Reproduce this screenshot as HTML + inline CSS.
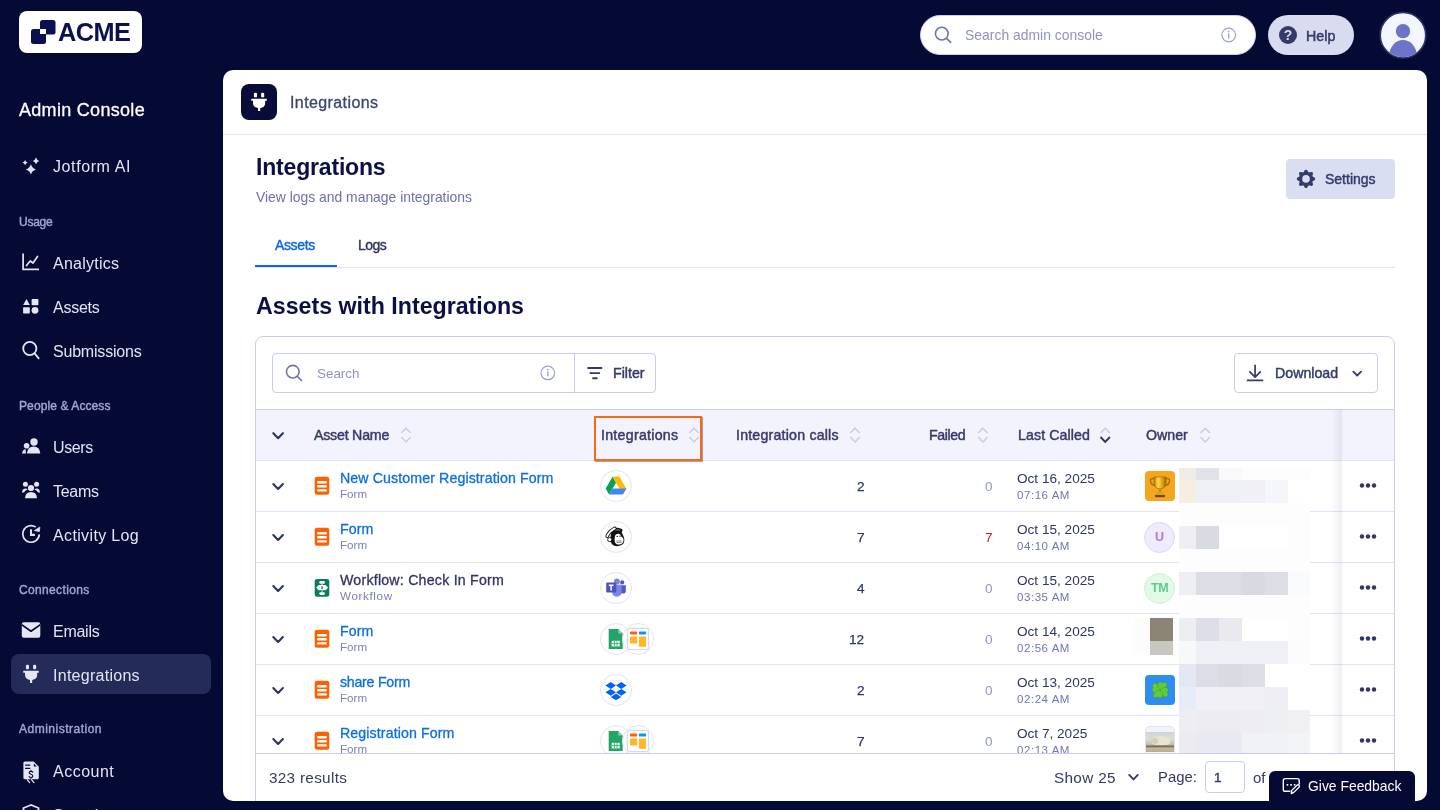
<!DOCTYPE html>
<html><head><meta charset="utf-8">
<style>
*{box-sizing:border-box;margin:0;padding:0}
html,body{width:1440px;height:810px;overflow:hidden;background:#050a35;font-family:"Liberation Sans",sans-serif}
.t{will-change:transform}
.a{position:absolute}
.t{position:absolute;line-height:1;white-space:nowrap}
.m{-webkit-text-stroke:0.3px currentColor}
svg{position:absolute;overflow:visible}
/* sidebar */
.sb{color:#e3e5f4;font-size:16px;margin-top:0.7px}
.lbl{color:#a2a6d3;font-size:12px;-webkit-text-stroke:0.4px #a2a6d3}
</style></head><body>

<!-- ===== SIDEBAR ===== -->
<div class="a" style="left:19px;top:11px;width:123px;height:42px;background:#fff;border-radius:8px"></div>
<svg style="left:0;top:0" width="160" height="60">
  <rect x="40" y="20" width="15.5" height="14.5" rx="2.5" fill="#0a1150"/>
  <rect x="31" y="29" width="15" height="15" rx="2.5" fill="#0a1150"/>
  <rect x="40" y="29" width="6" height="5" fill="#fff"/>
</svg>
<div class="t" style="left:58.3px;top:19.7px;font-size:25.3px;font-weight:bold;color:#0a1150;letter-spacing:-0.55px">ACME</div>

<div class="t m" style="left:19.2px;top:100.9px;font-size:18px;color:#fff;letter-spacing:0.3px">Admin Console</div>

<svg style="left:0;top:0" width="50" height="190" fill="#e3e5f4"><path d="M25.1 159.9Q25.694000000000003 162.006 27.8 162.6Q25.694000000000003 163.194 25.1 165.29999999999998Q24.506 163.194 22.400000000000002 162.6Q24.506 162.006 25.1 159.9Z"/><path d="M36 157.6Q36.726 160.174 39.3 160.9Q36.726 161.626 36 164.20000000000002Q35.274 161.626 32.7 160.9Q35.274 160.174 36 157.6Z"/><path d="M30.9 164.20000000000002Q32.044 168.256 36.1 169.4Q32.044 170.544 30.9 174.6Q29.756 170.544 25.7 169.4Q29.756 168.256 30.9 164.20000000000002Z"/></svg>
<div class="t sb" style="left:53px;top:158.4px;letter-spacing:0.6px">Jotform AI</div>

<div class="t lbl" style="left:19px;top:216.1px;letter-spacing:-0.25px">Usage</div>
<svg style="left:0;top:240px" width="50" height="40" fill="none" stroke="#e4e6f6" stroke-width="1.7">
  <path d="M23.1 13.5V29.4H39"/>
  <path d="M26.5 25.5L30.3 21L33 23L37.5 16.5" stroke-linecap="round" stroke-linejoin="round"/>
</svg>
<div class="t sb" style="left:53px;top:255px;letter-spacing:0.25px">Analytics</div>
<svg style="left:0;top:290px" width="50" height="40" fill="#e4e6f6">
  <path d="M26.5 9L29.8 15H23.1Z"/>
  <rect x="31.6" y="9" width="6.8" height="6.2" rx="0.8"/>
  <rect x="23.1" y="17.2" width="6.7" height="6.3" rx="0.8"/>
  <circle cx="35" cy="20.35" r="3.4"/>
</svg>
<div class="t sb" style="left:53px;top:299px;letter-spacing:-0.26px">Assets</div>
<svg style="left:0;top:330px" width="50" height="40" fill="none" stroke="#e4e6f6" stroke-width="1.8">
  <circle cx="29.8" cy="18.5" r="6.6"/>
  <path d="M34.6 23.4L38.7 28.3" stroke-linecap="round"/>
</svg>
<div class="t sb" style="left:53px;top:343px;letter-spacing:-0.2px">Submissions</div>

<div class="t lbl" style="left:19px;top:399.9px;letter-spacing:0.1px">People &amp; Access</div>
<svg style="left:0;top:430px" width="50" height="30" fill="#e4e6f6">
  <circle cx="34" cy="12" r="3.7"/>
  <path d="M26.9 23.4Q27.5 16.6 33.6 16.6Q39.7 16.6 40.3 23.4Z"/>
  <circle cx="26.6" cy="15.8" r="2.8"/>
  <path d="M22 23.4Q22.5 19.5 25.6 19.3L26 23.4Z"/>
</svg>
<div class="t sb" style="left:53px;top:439px;letter-spacing:-0.37px">Users</div>
<svg style="left:0;top:475px" width="50" height="30" fill="#e4e6f6">
  <circle cx="25.4" cy="9.3" r="2.5"/>
  <circle cx="36.6" cy="9.3" r="2.5"/>
  <circle cx="31" cy="13" r="3.1"/>
  <path d="M25 23.3Q25.4 17 31 17Q36.6 17 37 23.3Z"/>
  <path d="M22 17.5Q22.3 13.4 25.4 13.4Q27 13.4 27.6 14.5Q24.6 15.6 24 17.5Z"/>
  <path d="M40 17.5Q39.7 13.4 36.6 13.4Q35 13.4 34.4 14.5Q37.4 15.6 38 17.5Z"/>
</svg>
<div class="t sb" style="left:53px;top:483px;letter-spacing:-0.3px">Teams</div>
<svg style="left:0;top:515px" width="50" height="40" fill="none" stroke="#e3e5f4" stroke-width="1.7">
  <path d="M39.3 19.4A8.3 8.3 0 1 1 35.6 12"/>
  <path d="M34.4 15.6L39.9 12.1L39.3 16.5Z" fill="#e3e5f4" stroke-width="0.8" stroke-linejoin="round"/>
  <path d="M31 14.2V19.9H34.9" stroke-width="2.1"/>
</svg>
<div class="t sb" style="left:53px;top:527px;letter-spacing:0.36px">Activity Log</div>

<div class="t lbl" style="left:19px;top:583.5px;letter-spacing:0.35px">Connections</div>
<svg style="left:0;top:615px" width="50" height="30">
  <rect x="21.8" y="7.2" width="18.5" height="15.6" rx="2" fill="#e4e6f6"/>
  <path d="M21.6 9.6L31 16.2L40.4 9.6" fill="none" stroke="#050a35" stroke-width="1.7" stroke-linejoin="round"/>
</svg>
<div class="t sb" style="left:53px;top:623px;letter-spacing:-0.26px">Emails</div>

<div class="a" style="left:11px;top:654px;width:200px;height:40px;background:#252b58;border-radius:8px"></div>
<svg style="left:0;top:655px" width="50" height="30" fill="#e4e6f6">
  <rect x="25.9" y="9.7" width="3.1" height="4.6" rx="1.2"/>
  <rect x="33.1" y="9.7" width="3.1" height="4.6" rx="1.2"/>
  <path d="M23.4 15.7H38.4Q38.8 15.7 38.8 16.2V17.4Q38.8 17.8 38.4 17.8H37.2V19.6Q37.2 24.3 32.2 24.9V28H30V24.9Q25 24.3 25 19.6V17.8H23.6Q23.2 17.8 23.2 17.4V16.2Q23.2 15.7 23.6 15.7Z"/>
</svg>
<div class="t sb" style="left:53px;top:667px;letter-spacing:0.27px">Integrations</div>

<div class="t lbl" style="left:19px;top:723.3px;letter-spacing:0.5px">Administration</div>
<svg style="left:0;top:755.7px" width="50" height="40">
  <path d="M24.9 5.6H33.6L38.8 10.8V21.8Q38.8 23.3 37.3 23.3H24.9Q23.4 23.3 23.4 21.8V7.1Q23.4 5.6 24.9 5.6Z" fill="#e3e5f4"/>
  <path d="M33.8 7.6L36.8 10.6H34.4Q33.8 10.6 33.8 10Z" fill="#050a35"/>
  <path d="M25.6 9.1H29.8M25.6 12.3H29.8" stroke="#050a35" stroke-width="1.3" stroke-linecap="round"/>
  <path d="M32.9 16.1Q32.3 15.3 31 15.3Q29.1 15.4 29.2 16.8Q29.3 17.9 31 18.3Q32.9 18.8 32.8 20.1Q32.6 21.5 31 21.5Q29.7 21.5 29.1 20.7M31 14.4V15.3M31 21.5V22.3" fill="none" stroke="#050a35" stroke-width="1.15" stroke-linecap="round"/>
  <path d="M27.4 23.8L29.6 26.6M31.6 23.8L34 26.6" stroke="#e3e5f4" stroke-width="1.3" stroke-linecap="round"/>
</svg>
<div class="t sb" style="left:53px;top:763px;letter-spacing:0.5px">Account</div>
<svg style="left:0;top:795px" width="50" height="30" fill="none" stroke="#e4e6f6" stroke-width="1.8">
  <path d="M31 10L23.5 13V20Q23.5 27 31 30Q38.5 27 38.5 20V13Z"/>
</svg>
<div class="t sb" style="left:53px;top:807px">Security</div>

<!-- ===== TOPBAR ===== -->
<div class="a" style="left:920px;top:15px;width:336px;height:40px;background:#fff;border-radius:20px;border:1px solid #c9cdef"></div>
<svg style="left:0;top:0" width="1440" height="70" fill="none" stroke="#6d73b3" stroke-width="1.8">
  <circle cx="941.8" cy="33.6" r="6.35" stroke-width="1.6"/>
  <path d="M946.6 38.4L950.6 42.4" stroke-linecap="round" stroke-width="1.6"/>
  <circle cx="1228.7" cy="35" r="6.8" stroke="#9ca1d0" stroke-width="1.2"/>
</svg>
<svg style="left:0;top:0" width="1440" height="70" fill="#9ca1d0">
  <circle cx="1228.7" cy="31.6" r="0.9"/>
  <rect x="1228" y="33.5" width="1.4" height="5"/>
</svg>
<div class="t" style="left:965px;top:28.7px;font-size:13.9px;color:#8e93c4;letter-spacing:0.02px">Search admin console</div>

<div class="a" style="left:1268px;top:15px;width:86px;height:40px;background:#d9dcf0;border-radius:20px"></div>
<svg style="left:0;top:0" width="1440" height="70">
  <circle cx="1288" cy="35" r="9" fill="#343b6b"/>
  <text x="1288" y="40.2" font-size="14" font-weight="bold" text-anchor="middle" fill="#d9dcf0" font-family="Liberation Sans">?</text>
</svg>
<div class="t m" style="left:1305.6px;top:28.8px;font-size:14.2px;color:#343b6b;-webkit-text-stroke:0.5px #343b6b;letter-spacing:0.1px">Help</div>

<svg style="left:0;top:0" width="1440" height="70">
  <circle cx="1403" cy="35.2" r="22.8" fill="#f3f6ff" stroke="#2b2f68" stroke-width="1.7"/>
  <clipPath id="avc"><circle cx="1403" cy="35.2" r="22"/></clipPath>
  <g clip-path="url(#avc)" fill="#6c73c9">
    <circle cx="1403" cy="31.1" r="7.2"/>
    <ellipse cx="1403" cy="55.8" rx="13.8" ry="15.8"/>
  </g>
</svg>

<!-- ===== MAIN CARD ===== -->
<div id="card" class="a" style="left:223px;top:70px;width:1204px;height:731px;background:#fff;border-radius:10px;overflow:hidden">
<div class="a" style="left:-223px;top:-70px;width:1440px;height:810px">
<!-- card header -->
<div class="a" style="left:241px;top:84px;width:36px;height:36px;background:#070c38;border-radius:8px"></div>
<svg style="left:0;top:0" width="400" height="140" fill="#fff">
<g transform="translate(228 83.05)">
  <rect x="25.9" y="9.7" width="3.1" height="4.6" rx="1.2"/>
  <rect x="33.1" y="9.7" width="3.1" height="4.6" rx="1.2"/>
  <path d="M23.4 15.7H38.4Q38.8 15.7 38.8 16.2V17.4Q38.8 17.8 38.4 17.8H37.2V19.6Q37.2 24.3 32.2 24.9V28H30V24.9Q25 24.3 25 19.6V17.8H23.6Q23.2 17.8 23.2 17.4V16.2Q23.2 15.7 23.6 15.7Z"/></g>
</svg>
<div class="t m" style="left:289.5px;top:94.6px;font-size:16px;color:#3d4472;letter-spacing:0.4px">Integrations</div>
<div class="a" style="left:223px;top:134px;width:1204px;height:1px;background:#e3e5f6"></div>

<!-- title -->
<div class="t" style="left:255.5px;top:156px;font-size:23px;font-weight:bold;color:#0a1047;letter-spacing:-0.18px">Integrations</div>
<div class="t" style="left:255.5px;top:190.6px;font-size:13.9px;color:#6a71ae">View logs and manage integrations</div>

<div class="a" style="left:1286px;top:159px;width:109px;height:40px;background:#dadef2;border-radius:4px"></div>
<svg style="left:0;top:0" width="1440" height="220">
  <g fill="#343b6b"><path d="M1304.08 172.69L1305.49 170.42L1306.51 170.42L1307.92 172.69L1309.03 173.15L1311.64 172.54L1312.36 173.26L1311.75 175.87L1312.21 176.98L1314.48 178.39L1314.48 179.41L1312.21 180.82L1311.75 181.93L1312.36 184.54L1311.64 185.26L1309.03 184.65L1307.92 185.11L1306.51 187.38L1305.49 187.38L1304.08 185.11L1302.97 184.65L1300.36 185.26L1299.64 184.54L1300.25 181.93L1299.79 180.82L1297.52 179.41L1297.52 178.39L1299.79 176.98L1300.25 175.87L1299.64 173.26L1300.36 172.54L1302.97 173.15Z" stroke="#343b6b" stroke-width="1.3" stroke-linejoin="round"/><circle cx="1306" cy="178.9" r="3.8" fill="#dadef2"/></g>
</svg>
<div class="t m" style="left:1324.8px;top:172.2px;font-size:14px;color:#343b6b;-webkit-text-stroke:0.45px #343b6b">Settings</div>

<!-- tabs -->
<div class="t m" style="left:274.8px;top:237.8px;font-size:14px;color:#0b68df;-webkit-text-stroke:0.4px #0b68df;letter-spacing:-0.36px">Assets</div>
<div class="t m" style="left:357.5px;top:237.8px;font-size:14px;color:#2f3566;-webkit-text-stroke:0.4px #2f3566;letter-spacing:-0.5px">Logs</div>
<div class="a" style="left:255px;top:267px;width:1140px;height:1px;background:#e3e5f6"></div>
<div class="a" style="left:255px;top:265px;width:82px;height:2.2px;background:#0b68df"></div>

<div class="t" style="left:255.5px;top:294.5px;font-size:23.2px;font-weight:bold;color:#0a1047">Assets with Integrations</div>

<!-- table container -->
<div class="a" style="left:255px;top:336px;width:1140px;height:500px;border:1px solid #c8cdef;border-radius:8px"></div>
<div class="a" style="left:272px;top:353px;width:384px;height:40px;border:1px solid #c8cdef;border-radius:4px"></div><div class="a" style="left:574px;top:353px;width:1px;height:40px;background:#c8cdef"></div><svg style="left:0;top:0" width="1440" height="810" fill="none">
  <circle cx="292.8" cy="371.7" r="6.35" stroke="#6d73b3" stroke-width="1.6"/>
  <path d="M297.6 376.5L301.4 380.4" stroke="#6d73b3" stroke-width="1.6" stroke-linecap="round"/>
  <circle cx="547.8" cy="372.9" r="6.8" stroke="#9ca1d0" stroke-width="1.2"/>
  <circle cx="547.8" cy="369.6" r="0.9" fill="#9ca1d0"/>
  <rect x="547.1" y="371.4" width="1.4" height="5" fill="#9ca1d0"/>
  <path d="M587.4 368H602.2M589.6 373.1H600M592.3 378.2H597.5" stroke="#343b6b" stroke-width="1.9"/>
  <path d="M1255.1 364.8V377M1249.4 371.4L1255.1 377.1L1260.8 371.4M1246.8 380.3H1263.2" stroke="#343b6b" stroke-width="1.7" stroke-linejoin="round"/>
  <path d="M1353.3 371.6L1357.2 375.5L1361.1 371.6" stroke="#343b6b" stroke-width="1.8" stroke-linecap="round" stroke-linejoin="round"/>
</svg><div class="t" style="left:316.5px;top:366.66px;font-size:13.4px;color:#8e93c4;">Search</div>
<div class="t" style="left:613px;top:366.18px;font-size:14.2px;color:#343b6b;-webkit-text-stroke:0.45px #343b6b;">Filter</div>
<div class="a" style="left:1234px;top:353px;width:144px;height:40px;border:1px solid #c8cdef;border-radius:4px"></div><div class="t" style="left:1274.6px;top:365.78px;font-size:14.2px;color:#343b6b;-webkit-text-stroke:0.45px #343b6b;">Download</div>
<div class="a" style="left:256px;top:409px;width:1138px;height:52px;background:#f2f3fc;border-top:1px solid #c8cdef;border-bottom:1px solid #e1e4f6"></div><svg style="left:0;top:0" width="1440" height="810"><path d="M273.3 433.2L278.1 438.2L282.9 433.2" stroke="#2f3566" stroke-width="2.1" fill="none" stroke-linecap="round" stroke-linejoin="round"/><path d="M401.3 433L406.0 428.3L410.7 433" stroke="#c5cbf0" stroke-width="1.4" fill="none"/><path d="M401.3 437L406.0 441.9L410.7 437" stroke="#c5cbf0" stroke-width="1.4" fill="none"/><path d="M689.3 433L694.0 428.3L698.6999999999999 433" stroke="#c5cbf0" stroke-width="1.4" fill="none"/><path d="M689.3 437L694.0 441.9L698.6999999999999 437" stroke="#c5cbf0" stroke-width="1.4" fill="none"/><path d="M850.3 433L855.0 428.3L859.6999999999999 433" stroke="#c5cbf0" stroke-width="1.4" fill="none"/><path d="M850.3 437L855.0 441.9L859.6999999999999 437" stroke="#c5cbf0" stroke-width="1.4" fill="none"/><path d="M978.2 433L982.9000000000001 428.3L987.6 433" stroke="#c5cbf0" stroke-width="1.4" fill="none"/><path d="M978.2 437L982.9000000000001 441.9L987.6 437" stroke="#c5cbf0" stroke-width="1.4" fill="none"/><path d="M1100.5 433L1105.2 428.3L1109.9 433" stroke="#c5cbf0" stroke-width="1.4" fill="none"/><path d="M1100.5 437L1105.2 441.9L1109.9 437" stroke="#2f3566" stroke-width="1.9" fill="none"/><path d="M1200.5 433L1205.2 428.3L1209.9 433" stroke="#c5cbf0" stroke-width="1.4" fill="none"/><path d="M1200.5 437L1205.2 441.9L1209.9 437" stroke="#c5cbf0" stroke-width="1.4" fill="none"/></svg><div class="t" style="left:313.7px;top:428.18px;font-size:14.2px;color:#343b6b;letter-spacing:-0.22px;-webkit-text-stroke:0.45px #343b6b;">Asset Name</div>
<div class="t" style="left:601.3px;top:428.18px;font-size:14.2px;color:#343b6b;letter-spacing:0.27px;-webkit-text-stroke:0.45px #343b6b;">Integrations</div>
<div class="t" style="left:736.1px;top:428.18px;font-size:14.2px;color:#343b6b;letter-spacing:0.2px;-webkit-text-stroke:0.45px #343b6b;">Integration calls</div>
<div class="t" style="left:929px;top:428.18px;font-size:14.2px;color:#343b6b;letter-spacing:-0.4px;-webkit-text-stroke:0.45px #343b6b;">Failed</div>
<div class="t" style="left:1017.5px;top:428.18px;font-size:14.2px;color:#343b6b;letter-spacing:0.1px;-webkit-text-stroke:0.45px #343b6b;">Last Called</div>
<div class="t" style="left:1145.6px;top:428.18px;font-size:14.2px;color:#343b6b;letter-spacing:0px;-webkit-text-stroke:0.45px #343b6b;">Owner</div>
<div class="a" style="left:594px;top:416.2px;width:108px;height:45px;border:2px solid #f76a14;box-shadow:0.5px 0.8px 0.6px rgba(60,60,60,0.45)"></div><div class="a" style="left:0;top:0;width:1440px;height:753px;overflow:hidden"><svg style="left:0;top:0" width="1440" height="810"><path d="M273.3 484.1L278.1 489.0L282.9 484.1" stroke="#2f3566" stroke-width="2.1" fill="none" stroke-linecap="round" stroke-linejoin="round"/><rect x="314.7" y="476.7" width="14.6" height="18.1" rx="2.4" fill="#ff6100"/><rect x="317.1" y="481.00" width="9.8" height="2.4" rx="1.2" fill="#fff"/><rect x="317.1" y="485.10" width="9.8" height="2.4" rx="1.2" fill="#fff"/><rect x="317.1" y="489.20" width="9.8" height="2.4" rx="1.2" fill="#fff"/><circle cx="616" cy="486.0" r="15.5" fill="#fff" stroke="#e3e4ee" stroke-width="1"/><g transform="translate(616 484.8) scale(1.15)"><path d="M-3 -7H3L9 3.2L6 8.4Z" fill="#fbbc04"/><path d="M-3 -7L-9 3.3L-6 8.4L0 -1.8Z" fill="#0f9d58"/><path d="M-6 8.4H6L9 3.2H-3Z" fill="#4285f4"/><path d="M-3 -7H3L0 -1.8Z" fill="#fbbc04"/></g><circle cx="1362" cy="485.5" r="2.2" fill="#2f3566"/><circle cx="1368" cy="485.5" r="2.2" fill="#2f3566"/><circle cx="1374" cy="485.5" r="2.2" fill="#2f3566"/></svg><div class="t m" style="left:339.7px;top:470.98px;font-size:14.2px;color:#0b6fdf;letter-spacing:0.1px;">New Customer Registration Form</div>
<div class="t" style="left:339.7px;top:487.98px;font-size:11.6px;color:#7a80b8;">Form</div>
<div class="t" style="right:575.5px;top:479.79px;font-size:13.6px;color:#2f3566;-webkit-text-stroke:0.25px currentColor;">2</div>
<div class="t" style="right:447.5px;top:479.79px;font-size:13.6px;color:#9096c8;">0</div>
<div class="t" style="left:1016.8px;top:471.69px;font-size:13.6px;color:#2f3566;">Oct 16, 2025</div>
<div class="t" style="left:1016.8px;top:489.67px;font-size:11.5px;color:#6f76b3;letter-spacing:0.55px;">07:16 AM</div>
<div class="a" style="left:256px;top:511px;width:1138px;height:1px;background:#e1e4f6"></div><div class="a" style="left:1145px;top:470.5px;width:30px;height:30px;background:#f5a51e;border-radius:4px"></div><svg style="left:1145px;top:470.5px" width="30" height="30"><defs><linearGradient id="gold" x1="0" x2="1"><stop offset="0" stop-color="#b8860b"/><stop offset="0.35" stop-color="#ffd84a"/><stop offset="0.7" stop-color="#e0a010"/><stop offset="1" stop-color="#9a6a08"/></linearGradient></defs><path d="M9 6H21V11.5Q21 17.5 15 18Q9 17.5 9 11.5Z" fill="url(#gold)" stroke="#8a5a06" stroke-width="0.6"/><path d="M9.3 7.5Q5 7 5.5 10.5Q6.2 14 10 14.5M20.7 7.5Q25 7 24.5 10.5Q23.8 14 20 14.5" stroke="#a87208" stroke-width="1.5" fill="none"/><rect x="13.8" y="17.5" width="2.4" height="3.5" fill="#c48a0c"/><path d="M11.5 21H18.5L19.5 24.5H10.5Z" fill="#d9a21a"/><rect x="10" y="24" width="10" height="2.2" fill="#7a3e10"/></svg><svg style="left:0;top:0" width="1440" height="810"><path d="M273.3 535.1L278.1 540.0L282.9 535.1" stroke="#2f3566" stroke-width="2.1" fill="none" stroke-linecap="round" stroke-linejoin="round"/><rect x="314.7" y="527.7" width="14.6" height="18.1" rx="2.4" fill="#ff6100"/><rect x="317.1" y="532.00" width="9.8" height="2.4" rx="1.2" fill="#fff"/><rect x="317.1" y="536.10" width="9.8" height="2.4" rx="1.2" fill="#fff"/><rect x="317.1" y="540.20" width="9.8" height="2.4" rx="1.2" fill="#fff"/><circle cx="616" cy="537.0" r="15.5" fill="#fff" stroke="#e3e4ee" stroke-width="1"/><g transform="translate(616 537.8) scale(1)"><path d="M-2 -9.6Q3 -11 6.2 -8.6Q7.2 -7 5.6 -5.6L7.6 -1.2Q9.2 3 7.2 6.2Q4.6 8.6 0 8.3Q-4 7.9 -5.3 4Q-6.1 0 -5 -4Q-4 -8 -2 -9.6Z" fill="#111"/><path d="M-1.2 -9.4Q-6.5 -6.8 -8.8 -1.6" stroke="#111" stroke-width="3.6" fill="none" stroke-linecap="round"/><path d="M-1.2 -9.4Q-6.5 -6.8 -8.8 -1.6" stroke="#fff" stroke-width="1.8" fill="none" stroke-linecap="round"/><circle cx="-6.3" cy="1.8" r="2.1" fill="#fff" stroke="#111" stroke-width="0.9"/><path d="M-0.8 -2.6Q1.6 -4.6 4 -3.6Q5 -2.2 5.4 -1Q7.9 0 7.5 3Q7 6.4 3 6.8Q-0.4 7 -1.2 4Q-1.8 1 -0.8 -2.6Z" fill="#fff"/><circle cx="1.2" cy="-1.4" r="0.7" fill="#111"/><circle cx="4" cy="-1.6" r="0.7" fill="#111"/><path d="M0.6 3.2H6.2M0.6 4.6H5.6" stroke="#333" stroke-width="0.8" stroke-dasharray="1.2 0.6"/><path d="M-0.5 -7.6Q2 -8.4 4.2 -7.6" stroke="#fff" stroke-width="0.5" fill="none"/></g><circle cx="1362" cy="536.5" r="2.2" fill="#2f3566"/><circle cx="1368" cy="536.5" r="2.2" fill="#2f3566"/><circle cx="1374" cy="536.5" r="2.2" fill="#2f3566"/></svg><div class="t m" style="left:339.7px;top:521.98px;font-size:14.2px;color:#0b6fdf;letter-spacing:0.1px;">Form</div>
<div class="t" style="left:339.7px;top:538.98px;font-size:11.6px;color:#7a80b8;">Form</div>
<div class="t" style="right:575.5px;top:530.79px;font-size:13.6px;color:#2f3566;-webkit-text-stroke:0.25px currentColor;">7</div>
<div class="t" style="right:447.5px;top:530.79px;font-size:13.6px;color:#e0141e;">7</div>
<div class="t" style="left:1016.8px;top:522.69px;font-size:13.6px;color:#2f3566;">Oct 15, 2025</div>
<div class="t" style="left:1016.8px;top:540.67px;font-size:11.5px;color:#6f76b3;letter-spacing:0.55px;">04:10 AM</div>
<div class="a" style="left:256px;top:562px;width:1138px;height:1px;background:#e1e4f6"></div><div class="a" style="left:1144px;top:521.5px;width:31px;height:31px;background:#efeafd;border:1px solid #ddd6f7;border-radius:50%"></div><div class="t" style="left:1155.2px;top:530.52px;font-size:12.5px;color:#a77ae8;font-weight:bold;">U</div>
<svg style="left:0;top:0" width="1440" height="810"><path d="M273.3 586.1L278.1 591.0L282.9 586.1" stroke="#2f3566" stroke-width="2.1" fill="none" stroke-linecap="round" stroke-linejoin="round"/><rect x="314.7" y="578.9" width="14.6" height="17.9" rx="2.4" fill="#0c7a5d"/><g fill="#fff" transform="translate(0 0.0)"><rect x="319.3" y="581" width="5.6" height="2.8" rx="1.4"/><rect x="319.3" y="592.2" width="5.6" height="2.8" rx="1.4"/><path d="M316.1 587.7L318.6 585.1H325.6L328.1 587.7L325.6 590.3H318.6Z"/><rect x="321.4" y="586.2" width="1.4" height="3" fill="#0c7a5d"/><path d="M322.1 583.8V585.1M322.1 590.3V592.2" stroke="#fff" stroke-width="0.8"/></g><circle cx="616" cy="588.0" r="15.5" fill="#fff" stroke="#e3e4ee" stroke-width="1"/><g transform="translate(616 588.0) scale(1)"><circle cx="6.2" cy="-5.6" r="2.1" fill="#5059c9"/><path d="M4.2 -2.8H9.8V3Q9.8 5.6 7 5.6Q4.2 5.6 4.2 3Z" fill="#5059c9"/><circle cx="0.9" cy="-6.4" r="3" fill="#7b83eb"/><path d="M-3.9 -3.3H5.6V3.6Q5.6 8.7 0.8 8.7Q-3.9 8.7 -3.9 3.6Z" fill="#7b83eb"/><rect x="-9.8" y="-5.6" width="10.1" height="10.1" rx="1" fill="#4b53bc"/><path d="M-7.2 -2.8H-2.5M-4.85 -2.8V2.4" stroke="#fff" stroke-width="1.5"/></g><circle cx="1362" cy="587.5" r="2.2" fill="#2f3566"/><circle cx="1368" cy="587.5" r="2.2" fill="#2f3566"/><circle cx="1374" cy="587.5" r="2.2" fill="#2f3566"/></svg><div class="t m" style="left:339.7px;top:572.98px;font-size:14.2px;color:#2f3566;letter-spacing:0.22px;">Workflow: Check In Form</div>
<div class="t" style="left:339.7px;top:589.98px;font-size:11.6px;color:#7a80b8;letter-spacing:0.65px;">Workflow</div>
<div class="t" style="right:575.5px;top:581.79px;font-size:13.6px;color:#2f3566;-webkit-text-stroke:0.25px currentColor;">4</div>
<div class="t" style="right:447.5px;top:581.79px;font-size:13.6px;color:#9096c8;">0</div>
<div class="t" style="left:1016.8px;top:573.69px;font-size:13.6px;color:#2f3566;">Oct 15, 2025</div>
<div class="t" style="left:1016.8px;top:591.67px;font-size:11.5px;color:#6f76b3;letter-spacing:0.55px;">03:35 AM</div>
<div class="a" style="left:256px;top:613px;width:1138px;height:1px;background:#e1e4f6"></div><div class="a" style="left:1144px;top:572.5px;width:31px;height:31px;background:#e3f9e8;border:1px solid #cfeedb;border-radius:50%"></div><div class="t" style="left:1150.5px;top:581.52px;font-size:12.5px;color:#62c98c;font-weight:bold;letter-spacing:-0.3px;">TM</div>
<svg style="left:0;top:0" width="1440" height="810"><path d="M273.3 637.1L278.1 642.0L282.9 637.1" stroke="#2f3566" stroke-width="2.1" fill="none" stroke-linecap="round" stroke-linejoin="round"/><rect x="314.7" y="629.7" width="14.6" height="18.1" rx="2.4" fill="#ff6100"/><rect x="317.1" y="634.00" width="9.8" height="2.4" rx="1.2" fill="#fff"/><rect x="317.1" y="638.10" width="9.8" height="2.4" rx="1.2" fill="#fff"/><rect x="317.1" y="642.20" width="9.8" height="2.4" rx="1.2" fill="#fff"/><circle cx="616" cy="639.0" r="15.5" fill="#fff" stroke="#e3e4ee" stroke-width="1"/><g transform="translate(615.7 639.0) scale(1)"><path d="M-7 -10H2.6L7 -5.6V10H-7Z" fill="#23a566"/><path d="M2.6 -10L7 -5.6H2.6Z" fill="#8ed1b1"/><rect x="-4" y="1.8" width="8" height="5.6" fill="#fff"/><path d="M-4 4.6H4M-1.3 1.8V7.4M1.3 1.8V7.4" stroke="#23a566" stroke-width="0.8"/></g><circle cx="638" cy="639.0" r="15.5" fill="#fff" stroke="#e3e4ee" stroke-width="1"/><g transform="translate(638 639.0) scale(1)"><rect x="-10.7" y="-10.7" width="21.4" height="21.4" rx="2.5" fill="#fff" stroke="#c7cbee" stroke-width="0.9"/><rect x="-8" y="-7.6" width="7.2" height="3" rx="0.6" fill="#ff6100"/><rect x="0.9" y="-7.6" width="7.2" height="3" rx="0.6" fill="#0099ff"/><rect x="-8" y="-2.6" width="7.2" height="7" rx="0.6" fill="#ffb629"/><rect x="0.9" y="-2.6" width="7.2" height="10.4" rx="0.6" fill="#ffb629"/></g><circle cx="1362" cy="638.5" r="2.2" fill="#2f3566"/><circle cx="1368" cy="638.5" r="2.2" fill="#2f3566"/><circle cx="1374" cy="638.5" r="2.2" fill="#2f3566"/></svg><div class="t m" style="left:339.7px;top:623.98px;font-size:14.2px;color:#0b6fdf;letter-spacing:0.1px;">Form</div>
<div class="t" style="left:339.7px;top:640.98px;font-size:11.6px;color:#7a80b8;">Form</div>
<div class="t" style="right:575.5px;top:632.79px;font-size:13.6px;color:#2f3566;-webkit-text-stroke:0.25px currentColor;">12</div>
<div class="t" style="right:447.5px;top:632.79px;font-size:13.6px;color:#9096c8;">0</div>
<div class="t" style="left:1016.8px;top:624.69px;font-size:13.6px;color:#2f3566;">Oct 14, 2025</div>
<div class="t" style="left:1016.8px;top:642.67px;font-size:11.5px;color:#6f76b3;letter-spacing:0.55px;">02:56 AM</div>
<div class="a" style="left:256px;top:664px;width:1138px;height:1px;background:#e1e4f6"></div><div class="a" style="left:1135px;top:618px;width:44px;height:37px;background:#fcfcfd"></div><div class="a" style="left:1149.7px;top:618px;width:23.5px;height:23px;background:#8c8474"></div><div class="a" style="left:1149.7px;top:641px;width:23.5px;height:14px;background:#c9c7c1"></div><svg style="left:0;top:0" width="1440" height="810"><path d="M273.3 688.1L278.1 693.0L282.9 688.1" stroke="#2f3566" stroke-width="2.1" fill="none" stroke-linecap="round" stroke-linejoin="round"/><rect x="314.7" y="680.7" width="14.6" height="18.1" rx="2.4" fill="#ff6100"/><rect x="317.1" y="685.00" width="9.8" height="2.4" rx="1.2" fill="#fff"/><rect x="317.1" y="689.10" width="9.8" height="2.4" rx="1.2" fill="#fff"/><rect x="317.1" y="693.20" width="9.8" height="2.4" rx="1.2" fill="#fff"/><circle cx="616" cy="690.0" r="15.5" fill="#fff" stroke="#e3e4ee" stroke-width="1"/><g transform="translate(616 690.0) scale(1.1)"><path d="M-4.8 -7.2L-9.6 -4.1L-4.8 -1L0 -4.1Z M4.8 -7.2L0 -4.1L4.8 -1L9.6 -4.1Z M-9.6 2.1L-4.8 5.2L0 2.1L-4.8 -1Z M9.6 2.1L4.8 5.2L0 2.1L4.8 -1Z M-4.8 6.3L0 9.3L4.8 6.3L0 3.2Z" fill="#0061fe"/></g><circle cx="1362" cy="689.5" r="2.2" fill="#2f3566"/><circle cx="1368" cy="689.5" r="2.2" fill="#2f3566"/><circle cx="1374" cy="689.5" r="2.2" fill="#2f3566"/></svg><div class="t m" style="left:339.7px;top:674.98px;font-size:14.2px;color:#0b6fdf;letter-spacing:-0.25px;">share Form</div>
<div class="t" style="left:339.7px;top:691.98px;font-size:11.6px;color:#7a80b8;">Form</div>
<div class="t" style="right:575.5px;top:683.79px;font-size:13.6px;color:#2f3566;-webkit-text-stroke:0.25px currentColor;">2</div>
<div class="t" style="right:447.5px;top:683.79px;font-size:13.6px;color:#9096c8;">0</div>
<div class="t" style="left:1016.8px;top:675.69px;font-size:13.6px;color:#2f3566;">Oct 13, 2025</div>
<div class="t" style="left:1016.8px;top:693.67px;font-size:11.5px;color:#6f76b3;letter-spacing:0.55px;">02:24 AM</div>
<div class="a" style="left:256px;top:715px;width:1138px;height:1px;background:#e1e4f6"></div><div class="a" style="left:1145px;top:674.5px;width:30px;height:30px;background:#2e8ef0;border-radius:4px"></div><svg style="left:1145px;top:674.5px" width="30" height="30"><path d="M15.2 15Q15.8 19.5 17.6 22.5" stroke="#3f9a2a" stroke-width="1.3" fill="none"/><g transform="translate(15.2 15)"><g transform="rotate(0)"><path d="M0 0C-0.6 -3 -3.2 -8 -6.4 -6.6C-8.4 -5.6 -8 -3.2 -6.6 -2.4C-8.4 -1.6 -8.6 1.6 -6 2.4C-3 3.2 -1 0.8 0 0Z" fill="#62cc38" stroke="#3d9e22" stroke-width="0.5"/></g><g transform="rotate(90)"><path d="M0 0C-0.6 -3 -3.2 -8 -6.4 -6.6C-8.4 -5.6 -8 -3.2 -6.6 -2.4C-8.4 -1.6 -8.6 1.6 -6 2.4C-3 3.2 -1 0.8 0 0Z" fill="#62cc38" stroke="#3d9e22" stroke-width="0.5"/></g><g transform="rotate(180)"><path d="M0 0C-0.6 -3 -3.2 -8 -6.4 -6.6C-8.4 -5.6 -8 -3.2 -6.6 -2.4C-8.4 -1.6 -8.6 1.6 -6 2.4C-3 3.2 -1 0.8 0 0Z" fill="#62cc38" stroke="#3d9e22" stroke-width="0.5"/></g><g transform="rotate(270)"><path d="M0 0C-0.6 -3 -3.2 -8 -6.4 -6.6C-8.4 -5.6 -8 -3.2 -6.6 -2.4C-8.4 -1.6 -8.6 1.6 -6 2.4C-3 3.2 -1 0.8 0 0Z" fill="#62cc38" stroke="#3d9e22" stroke-width="0.5"/></g></g></svg><svg style="left:0;top:0" width="1440" height="810"><path d="M273.3 739.1L278.1 744.0L282.9 739.1" stroke="#2f3566" stroke-width="2.1" fill="none" stroke-linecap="round" stroke-linejoin="round"/><rect x="314.7" y="731.7" width="14.6" height="18.1" rx="2.4" fill="#ff6100"/><rect x="317.1" y="736.00" width="9.8" height="2.4" rx="1.2" fill="#fff"/><rect x="317.1" y="740.10" width="9.8" height="2.4" rx="1.2" fill="#fff"/><rect x="317.1" y="744.20" width="9.8" height="2.4" rx="1.2" fill="#fff"/><circle cx="616" cy="741.0" r="15.5" fill="#fff" stroke="#e3e4ee" stroke-width="1"/><g transform="translate(615.7 741.0) scale(1)"><path d="M-7 -10H2.6L7 -5.6V10H-7Z" fill="#23a566"/><path d="M2.6 -10L7 -5.6H2.6Z" fill="#8ed1b1"/><rect x="-4" y="1.8" width="8" height="5.6" fill="#fff"/><path d="M-4 4.6H4M-1.3 1.8V7.4M1.3 1.8V7.4" stroke="#23a566" stroke-width="0.8"/></g><circle cx="638" cy="741.0" r="15.5" fill="#fff" stroke="#e3e4ee" stroke-width="1"/><g transform="translate(638 741.0) scale(1)"><rect x="-10.7" y="-10.7" width="21.4" height="21.4" rx="2.5" fill="#fff" stroke="#c7cbee" stroke-width="0.9"/><rect x="-8" y="-7.6" width="7.2" height="3" rx="0.6" fill="#ff6100"/><rect x="0.9" y="-7.6" width="7.2" height="3" rx="0.6" fill="#0099ff"/><rect x="-8" y="-2.6" width="7.2" height="7" rx="0.6" fill="#ffb629"/><rect x="0.9" y="-2.6" width="7.2" height="10.4" rx="0.6" fill="#ffb629"/></g><circle cx="1362" cy="740.5" r="2.2" fill="#2f3566"/><circle cx="1368" cy="740.5" r="2.2" fill="#2f3566"/><circle cx="1374" cy="740.5" r="2.2" fill="#2f3566"/></svg><div class="t m" style="left:339.7px;top:725.98px;font-size:14.2px;color:#0b6fdf;letter-spacing:0.1px;">Registration Form</div>
<div class="t" style="left:339.7px;top:742.98px;font-size:11.6px;color:#7a80b8;">Form</div>
<div class="t" style="right:575.5px;top:734.79px;font-size:13.6px;color:#2f3566;-webkit-text-stroke:0.25px currentColor;">7</div>
<div class="t" style="right:447.5px;top:734.79px;font-size:13.6px;color:#9096c8;">0</div>
<div class="t" style="left:1016.8px;top:726.69px;font-size:13.6px;color:#2f3566;">Oct 7, 2025</div>
<div class="t" style="left:1016.8px;top:744.67px;font-size:11.5px;color:#6f76b3;letter-spacing:0.55px;">02:13 AM</div>
<div class="a" style="left:1145px;top:725.5px;width:30px;height:30px;background:#f1f2fc;border:1px solid #dfe1f3;border-radius:5px;overflow:hidden"><div class="a" style="left:0;top:5px;width:30px;height:20px;background:linear-gradient(180deg,#cdd3d6 0%,#dcdcd6 35%,#c7c2b0 62%,#6c6a5e 72%,#c2b89a 80%,#b9ad8e 100%)"></div><div class="a" style="left:6px;top:9.5px;width:18px;height:9px;background:#e9e3cf;border-radius:50% 60% 30% 30%"></div><div class="a" style="left:6px;top:11.5px;width:5.5px;height:6px;background:#d6cfb8;border-radius:50%"></div></div><div class="a" style="left:1179px;top:468px;width:17px;height:12px;background:#f1ece8"></div><div class="a" style="left:1196px;top:468px;width:23px;height:12px;background:#e1e2ea"></div><div class="a" style="left:1219px;top:468px;width:23px;height:12px;background:#f9f9fb"></div><div class="a" style="left:1242px;top:468px;width:23px;height:12px;background:#fdfdfd"></div><div class="a" style="left:1265px;top:468px;width:23px;height:12px;background:#fdfdfd"></div><div class="a" style="left:1288px;top:468px;width:22px;height:12px;background:#fdfdfd"></div><div class="a" style="left:1179px;top:480px;width:17px;height:23px;background:#f7ede3"></div><div class="a" style="left:1196px;top:480px;width:23px;height:23px;background:#eff0f5"></div><div class="a" style="left:1219px;top:480px;width:23px;height:23px;background:#eff0f5"></div><div class="a" style="left:1242px;top:480px;width:23px;height:23px;background:#f1f1f5"></div><div class="a" style="left:1265px;top:480px;width:23px;height:23px;background:#f5f6fa"></div><div class="a" style="left:1288px;top:480px;width:22px;height:23px;background:#ffffff"></div><div class="a" style="left:1179px;top:503px;width:17px;height:23px;background:#fdfdfd"></div><div class="a" style="left:1196px;top:503px;width:23px;height:23px;background:#fdfdfd"></div><div class="a" style="left:1219px;top:503px;width:23px;height:23px;background:#fdfdfd"></div><div class="a" style="left:1242px;top:503px;width:23px;height:23px;background:#fdfdfd"></div><div class="a" style="left:1265px;top:503px;width:23px;height:23px;background:#fdfdfd"></div><div class="a" style="left:1288px;top:503px;width:22px;height:23px;background:#fdfdfd"></div><div class="a" style="left:1179px;top:526px;width:17px;height:23px;background:#efeff3"></div><div class="a" style="left:1196px;top:526px;width:23px;height:23px;background:#d9dbe3"></div><div class="a" style="left:1219px;top:526px;width:23px;height:23px;background:#ffffff"></div><div class="a" style="left:1242px;top:526px;width:23px;height:23px;background:#ffffff"></div><div class="a" style="left:1265px;top:526px;width:23px;height:23px;background:#ffffff"></div><div class="a" style="left:1288px;top:526px;width:22px;height:23px;background:#fdfdfd"></div><div class="a" style="left:1179px;top:549px;width:17px;height:23px;background:#fdfdfd"></div><div class="a" style="left:1196px;top:549px;width:23px;height:23px;background:#fdfdfd"></div><div class="a" style="left:1219px;top:549px;width:23px;height:23px;background:#fdfdfd"></div><div class="a" style="left:1242px;top:549px;width:23px;height:23px;background:#fdfdfd"></div><div class="a" style="left:1265px;top:549px;width:23px;height:23px;background:#fdfdfd"></div><div class="a" style="left:1288px;top:549px;width:22px;height:23px;background:#fdfdfd"></div><div class="a" style="left:1179px;top:572px;width:17px;height:23px;background:#eeeff2"></div><div class="a" style="left:1196px;top:572px;width:23px;height:23px;background:#dcdde5"></div><div class="a" style="left:1219px;top:572px;width:23px;height:23px;background:#dcdde5"></div><div class="a" style="left:1242px;top:572px;width:23px;height:23px;background:#d8d9e1"></div><div class="a" style="left:1265px;top:572px;width:23px;height:23px;background:#dcdde5"></div><div class="a" style="left:1288px;top:572px;width:22px;height:23px;background:#f9fafc"></div><div class="a" style="left:1179px;top:595px;width:17px;height:23px;background:#fdfdfd"></div><div class="a" style="left:1196px;top:595px;width:23px;height:23px;background:#fdfdfd"></div><div class="a" style="left:1219px;top:595px;width:23px;height:23px;background:#fdfdfd"></div><div class="a" style="left:1242px;top:595px;width:23px;height:23px;background:#fdfdfd"></div><div class="a" style="left:1265px;top:595px;width:23px;height:23px;background:#fdfdfd"></div><div class="a" style="left:1288px;top:595px;width:22px;height:23px;background:#fdfdfd"></div><div class="a" style="left:1179px;top:618px;width:17px;height:23px;background:#eceef2"></div><div class="a" style="left:1196px;top:618px;width:23px;height:23px;background:#dddee7"></div><div class="a" style="left:1219px;top:618px;width:23px;height:23px;background:#e9e9ee"></div><div class="a" style="left:1242px;top:618px;width:23px;height:23px;background:#ffffff"></div><div class="a" style="left:1265px;top:618px;width:23px;height:23px;background:#ffffff"></div><div class="a" style="left:1288px;top:618px;width:22px;height:23px;background:#fdfdfd"></div><div class="a" style="left:1179px;top:641px;width:17px;height:23px;background:#f7f8fa"></div><div class="a" style="left:1196px;top:641px;width:23px;height:23px;background:#eff0f5"></div><div class="a" style="left:1219px;top:641px;width:23px;height:23px;background:#eff0f5"></div><div class="a" style="left:1242px;top:641px;width:23px;height:23px;background:#eff0f5"></div><div class="a" style="left:1265px;top:641px;width:23px;height:23px;background:#eff0f5"></div><div class="a" style="left:1288px;top:641px;width:22px;height:23px;background:#fcfcfd"></div><div class="a" style="left:1179px;top:664px;width:17px;height:23px;background:#e2e7f3"></div><div class="a" style="left:1196px;top:664px;width:23px;height:23px;background:#dcdde6"></div><div class="a" style="left:1219px;top:664px;width:23px;height:23px;background:#d9dbe3"></div><div class="a" style="left:1242px;top:664px;width:23px;height:23px;background:#dddee6"></div><div class="a" style="left:1265px;top:664px;width:23px;height:23px;background:#ffffff"></div><div class="a" style="left:1288px;top:664px;width:22px;height:23px;background:#ffffff"></div><div class="a" style="left:1179px;top:687px;width:17px;height:23px;background:#e6edf8"></div><div class="a" style="left:1196px;top:687px;width:23px;height:23px;background:#f0f0f5"></div><div class="a" style="left:1219px;top:687px;width:23px;height:23px;background:#f0f0f5"></div><div class="a" style="left:1242px;top:687px;width:23px;height:23px;background:#f0f0f5"></div><div class="a" style="left:1265px;top:687px;width:23px;height:23px;background:#efeff3"></div><div class="a" style="left:1288px;top:687px;width:22px;height:23px;background:#ffffff"></div><div class="a" style="left:1179px;top:710px;width:17px;height:23px;background:#eeeef2"></div><div class="a" style="left:1196px;top:710px;width:23px;height:23px;background:#ededf1"></div><div class="a" style="left:1219px;top:710px;width:23px;height:23px;background:#ededf1"></div><div class="a" style="left:1242px;top:710px;width:23px;height:23px;background:#eeeef2"></div><div class="a" style="left:1265px;top:710px;width:23px;height:23px;background:#eeeff2"></div><div class="a" style="left:1288px;top:710px;width:22px;height:23px;background:#f0f0f2"></div><div class="a" style="left:1179px;top:733px;width:17px;height:20px;background:#ececf0"></div><div class="a" style="left:1196px;top:733px;width:23px;height:20px;background:#e8e9f1"></div><div class="a" style="left:1219px;top:733px;width:23px;height:20px;background:#e8e9f1"></div><div class="a" style="left:1242px;top:733px;width:23px;height:20px;background:#f1f2f6"></div><div class="a" style="left:1265px;top:733px;width:23px;height:20px;background:#f1f2f6"></div><div class="a" style="left:1288px;top:733px;width:22px;height:20px;background:#f3f4f7"></div><div class="a" style="left:1331px;top:410px;width:11px;height:343px;background:linear-gradient(90deg,rgba(40,45,90,0) 0%,rgba(40,45,90,0.075) 100%)"></div></div><div class="a" style="left:256px;top:753px;width:1138px;height:1px;background:#c8cdef"></div><div class="t" style="left:268.7px;top:769.65px;font-size:15.3px;color:#343b6b;letter-spacing:0.3px;">323 results</div>
<div class="t" style="left:1053.9px;top:769.65px;font-size:15.3px;color:#343b6b;letter-spacing:0.33px;">Show 25</div>
<svg style="left:0;top:0" width="1440" height="810"><path d="M1129.2 774.9L1133.5 779.4L1137.8 774.9" stroke="#343b6b" stroke-width="1.9" fill="none" stroke-linecap="round" stroke-linejoin="round"/></svg><div class="t" style="left:1157.8px;top:769.99px;font-size:14.9px;color:#343b6b;">Page:</div>
<div class="a" style="left:1205px;top:761px;width:40px;height:32px;border:1px solid #c8cdef;border-radius:4px"></div><div class="t" style="left:1213.6px;top:770.57px;font-size:13.5px;color:#343b6b;-webkit-text-stroke:0.4px #343b6b;">1</div>
<div class="t" style="left:1253px;top:769.90px;font-size:15px;color:#343b6b;">of</div>

</div>
</div>

<!-- give feedback -->
<div class="a" style="left:1269px;top:771px;width:146px;height:45px;background:#050a35;border-radius:6px 6px 0 0"></div>
<svg style="left:0;top:0" width="1440" height="810" fill="none" stroke="#fff" stroke-width="1.4">
  <path d="M1290.5 791.3H1285.2Q1283.3 791.3 1283.3 789.4V780.5Q1283.3 778.6 1285.2 778.6H1297.3Q1299.2 778.6 1299.2 780.5V784.5"/>
  <path d="M1287.3 784.8H1287.6M1290.9 784.8H1291.2M1294.5 784.8H1294.8" stroke-width="1.7" stroke-linecap="round"/>
  <path d="M1291.2 793.6L1291.8 790.4L1297 785.2Q1298 784.2 1299 785.2Q1300 786.2 1299 787.2L1293.8 792.4Z" stroke-linejoin="round" stroke-width="1.3"/>
</svg>
<div class="t" style="left:1307.5px;top:779.3px;font-size:13.9px;color:#fff;margin-top:1px">Give Feedback</div>

</body></html>
